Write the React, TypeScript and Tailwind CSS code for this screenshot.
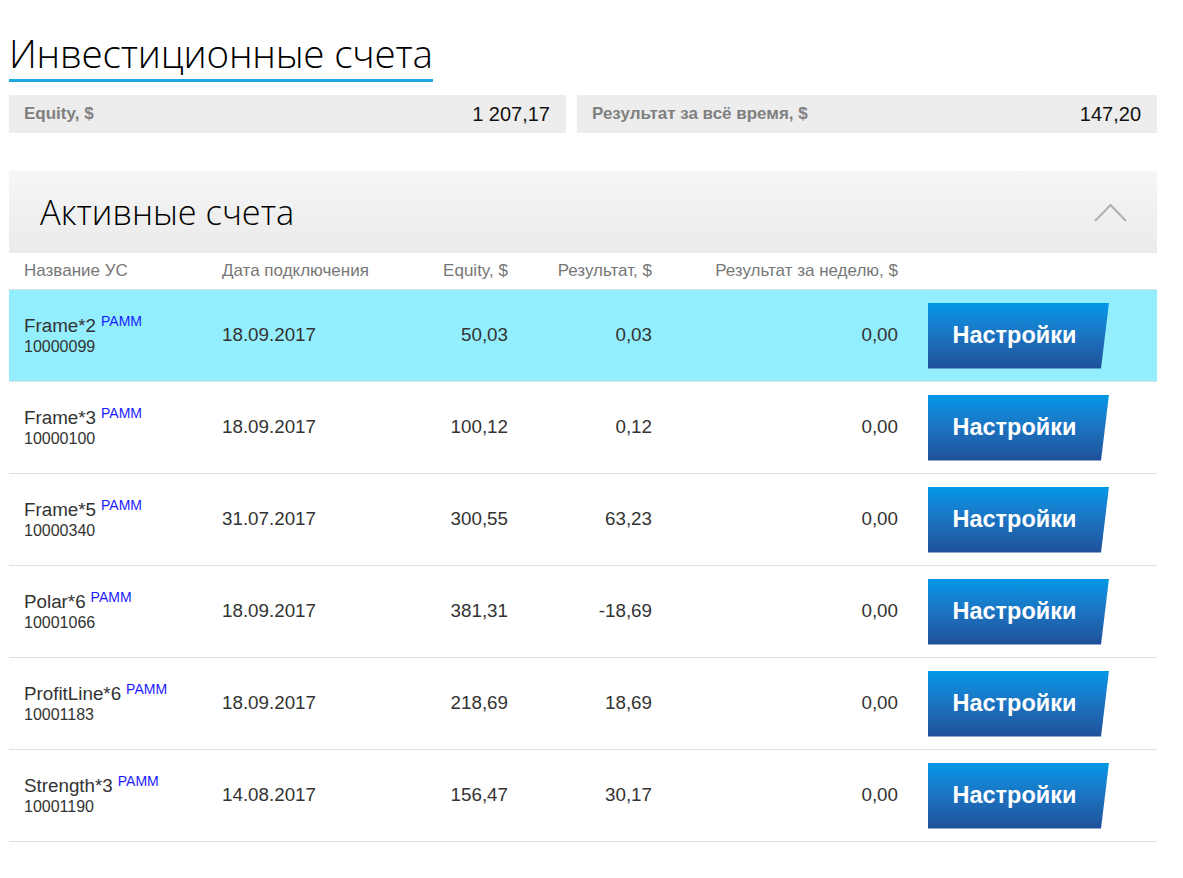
const rows = [
  { name: 'Frame*2', num: '10000099', date: '18.09.2017', equity: '50,03', result: '0,03', week: '0,00', active: true },
  { name: 'Frame*3', num: '10000100', date: '18.09.2017', equity: '100,12', result: '0,12', week: '0,00' },
  { name: 'Frame*5', num: '10000340', date: '31.07.2017', equity: '300,55', result: '63,23', week: '0,00' },
  { name: 'Polar*6', num: '10001066', date: '18.09.2017', equity: '381,31', result: '-18,69', week: '0,00' },
  { name: 'ProfitLine*6', num: '10001183', date: '18.09.2017', equity: '218,69', result: '18,69', week: '0,00' },
  { name: 'Strength*3', num: '10001190', date: '14.08.2017', equity: '156,47', result: '30,17', week: '0,00' },
];

const grid = 'grid grid-cols-[198px_200px_86px_144px_246px_1fr] pl-[15px] items-center';

function SettingsButton() {
  return (
    <button
      className="h-[66px] w-[181px] pr-[8px] bg-gradient-to-b from-[#0097e8] to-[#20509a] text-white font-bold text-[23.5px] [clip-path:polygon(0_0,100%_0,95.6%_100%,0_100%)]"
    >
      Настройки
    </button>
  );
}

export default function App() {
  return (
    <div className="min-h-screen bg-white font-['Liberation_Sans',Arial,sans-serif] text-[#333]">
      <div className="w-[1148px] ml-[9px]">
        <div className="pt-[30px]">
          <h1 className="inline-block font-['Open_Sans',sans-serif] font-light text-[38.6px] leading-[47px] text-black border-b-[3px] border-[#1ca6e2] pb-[2px] tracking-[-0.2px]">
            Инвестиционные счета
          </h1>
        </div>
        <div className="flex gap-[11px] mt-[13px]">
          <div className="w-[557px] h-[38px] bg-[#ededed] flex items-center justify-between pl-[15px] pr-[16px]">
            <span className="text-[#808080] font-bold text-[17px]">Equity, $</span>
            <span className="text-[#111] text-[20px]">1 207,17</span>
          </div>
          <div className="flex-1 h-[38px] bg-[#ededed] flex items-center justify-between pl-[15px] pr-[16px]">
            <span className="text-[#808080] font-bold text-[17px]">Результат за всё время, $</span>
            <span className="text-[#111] text-[20px]">147,20</span>
          </div>
        </div>

        <div className="mt-[38px] h-[82px] bg-gradient-to-b from-[#f6f6f6] to-[#ebebeb] flex items-center justify-between pl-[31px] pr-[30px]">
          <span className="font-['Open_Sans',sans-serif] font-light text-[34.4px] text-black">Активные счета</span>
          <svg width="33" height="20" viewBox="0 0 33 20" fill="none" className="mt-[2px]">
            <path d="M1 18 L16.5 2 L32 18" stroke="#b0b0b0" strokeWidth="2" />
          </svg>
        </div>

        <div className={`${grid} h-[37px] text-[17px] text-[#777] border-b border-[#e0e0e0]`}>
          <span>Название УС</span>
          <span>Дата подключения</span>
          <span className="text-right">Equity, $</span>
          <span className="text-right">Результат, $</span>
          <span className="text-right">Результат за неделю, $</span>
          <span />
        </div>

        {rows.map((r) => (
          <div
            key={r.num}
            className={`${grid} h-[92px] border-b border-[#e0e0e0] text-[18.8px] ${r.active ? 'bg-[#93eefd]' : 'bg-white'}`}
          >
            <div className="flex flex-col">
              <div className="leading-[22px]">
                {r.name}
                <sup className="ml-[5px] text-[14px] text-[#1a1aff] relative -top-[6px]">PAMM</sup>
              </div>
              <div className="text-[16px] leading-[20px]">{r.num}</div>
            </div>
            <span>{r.date}</span>
            <span className="text-right">{r.equity}</span>
            <span className="text-right">{r.result}</span>
            <span className="text-right">{r.week}</span>
            <div className="pl-[30px] flex">
              <SettingsButton />
            </div>
          </div>
        ))}
      </div>
    </div>
  );
}
